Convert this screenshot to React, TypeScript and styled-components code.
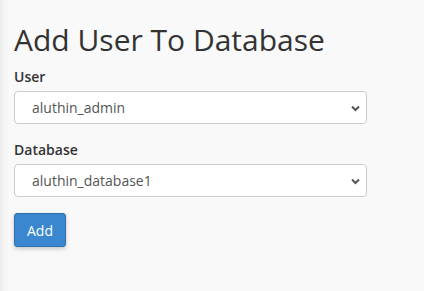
import React from 'react';
import styled, { createGlobalStyle } from 'styled-components';

const GlobalStyle = createGlobalStyle`
  html, body { margin: 0; padding: 0; }
  body {
    background: #f9f9f9;
    font-family: "Open Sans", "Liberation Sans", sans-serif;
    color: #333;
  }
`

const Page = styled.div`
  min-height: 291px;
  box-sizing: border-box;
  padding: 20px 14px 0 14px;
  background: linear-gradient(to right, #ebebeb 0px, #f4f4f4 4px, #f9f9f9 9px, #f9f9f9 100%);
`

const Title = styled.h1`
  margin: 0 0 7px 0;
  font-size: 30px;
  font-weight: 400;
  line-height: 40px;
  color: #333;
`

const Field = styled.div`
  margin-bottom: 16px;
`

const Label = styled.label`
  display: block;
  font-size: 14px;
  font-weight: 600;
  line-height: 20px;
  margin-bottom: 4px;
  color: #333;
`

const SelectWrap = styled.div`
  position: relative;
  width: 353px;
`

const Select = styled.select`
  appearance: none;
  -webkit-appearance: none;
  width: 100%;
  height: 33px;
  box-sizing: border-box;
  padding: 0 30px 0 17px;
  font-family: "Open Sans", "Liberation Sans", sans-serif;
  font-size: 14px;
  color: #555;
  background: #fff;
  border: 1px solid #ccc;
  border-radius: 4px;
  outline: none;
`

const Chevron = styled.svg`
  position: absolute;
  right: 7px;
  top: 14px;
  pointer-events: none;
`

const AddButton = styled.button`
  width: 52px;
  height: 34px;
  box-sizing: border-box;
  font-family: "Open Sans", "Liberation Sans", sans-serif;
  font-size: 14px;
  color: #fff;
  background: #3a87d0;
  border: 1px solid #2e6fae;
  border-radius: 3px;
  box-shadow: 0 2px 4px rgba(0, 0, 0, 0.2);
  padding: 0;
  cursor: pointer;
`

const Arrow = () => (
  <Chevron width="9" height="7" viewBox="0 0 9 7">
    <path d="M1 1.5 L4.5 5 L8 1.5" fill="none" stroke="#555" strokeWidth="2" />
  </Chevron>
)

const DropDown = ({ id, value }: { id: string, value: string }) => (
  <SelectWrap>
    <Select id={id} defaultValue={value}>
      <option value={value}>{value}</option>
    </Select>
    <Arrow />
  </SelectWrap>
)

export default function App() {
  return <>
    <GlobalStyle />
    <Page>
      <Title>Add User To Database</Title>
      <Field>
        <Label htmlFor='user'>User</Label>
        <DropDown id='user' value='aluthin_admin' />
      </Field>
      <Field>
        <Label htmlFor='database'>Database</Label>
        <DropDown id='database' value='aluthin_database1' />
      </Field>
      <AddButton>Add</AddButton>
    </Page>
  </>
}
